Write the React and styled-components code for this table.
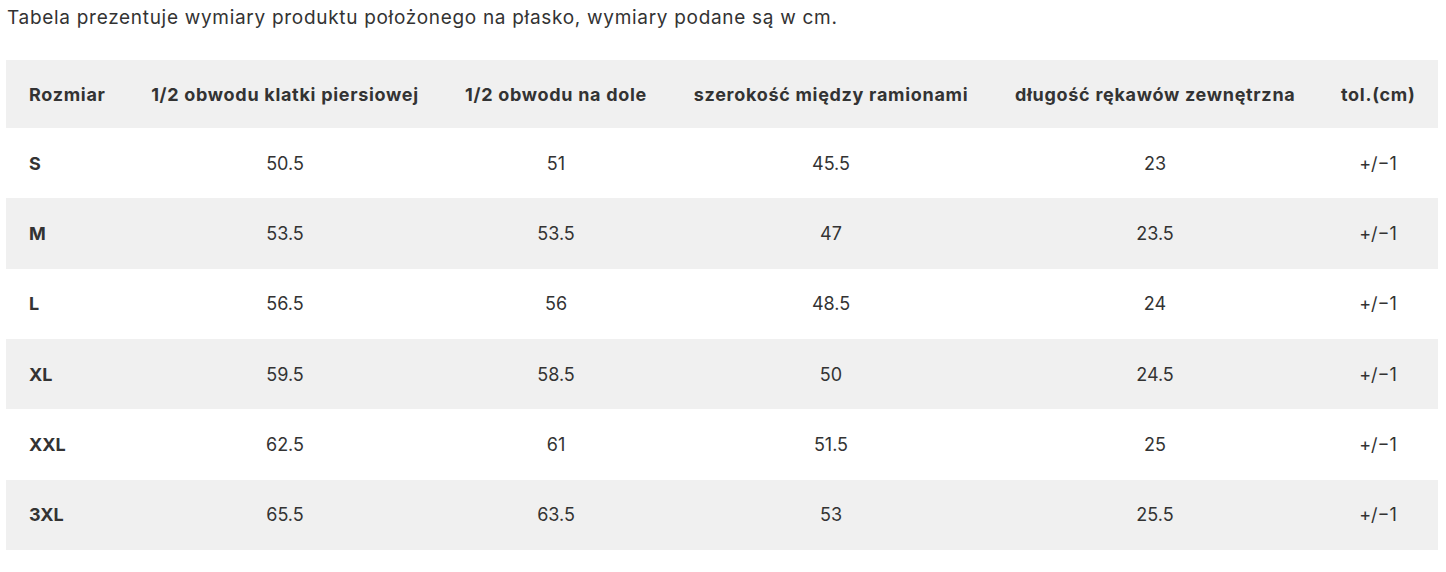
import React from 'react'
import styled, { createGlobalStyle } from 'styled-components'

const GlobalStyle = createGlobalStyle`
  body {
    margin: 0;
    background: #fff;
    color: #333;
    font-family: Inter, "Liberation Sans", sans-serif;
  }
`

const Page = styled.div`
  padding: 0 8px 0 6px;
`

const Intro = styled.p`
  margin: 0;
  padding: 4px 0 0 1px;
  height: 60px;
  box-sizing: border-box;
  font-size: 19px;
  letter-spacing: 0.7px;
  line-height: 28px;
  color: #333;
`

const Table = styled.table`
  width: 1432px;
  border-collapse: collapse;
  table-layout: fixed;
`

const Row = styled.tr`
  height: ${({ $head }) => ($head ? '68px' : '70.33px')};
  background: ${({ $shaded }) => ($shaded ? '#f0f0f0' : '#fff')};
`

const HeadCell = styled.th`
  padding: 0 23px;
  font-size: 18px;
  letter-spacing: 0.7px;
  font-weight: 700;
  color: #333;
  text-align: ${({ $left }) => ($left ? 'left' : 'center')};
  white-space: nowrap;
`

const Cell = styled.td`
  padding: 0 23px;
  font-size: 18px;
  font-weight: ${({ $bold }) => ($bold ? 700 : 400)};
  color: #333;
  text-align: ${({ $left }) => ($left ? 'left' : 'center')};
  white-space: nowrap;
`

const widths = [122, 314, 228, 322, 326, 120]

const headers = [
  'Rozmiar',
  '1/2 obwodu klatki piersiowej',
  '1/2 obwodu na dole',
  'szerokość między ramionami',
  'długość rękawów zewnętrzna',
  'tol.(cm)',
]

const rows = [
  ['S', '50.5', '51', '45.5', '23', '+/−1'],
  ['M', '53.5', '53.5', '47', '23.5', '+/−1'],
  ['L', '56.5', '56', '48.5', '24', '+/−1'],
  ['XL', '59.5', '58.5', '50', '24.5', '+/−1'],
  ['XXL', '62.5', '61', '51.5', '25', '+/−1'],
  ['3XL', '65.5', '63.5', '53', '25.5', '+/−1'],
]

const App = () => {
  return (
    <Page>
      <GlobalStyle />
      <Intro>Tabela prezentuje wymiary produktu położonego na płasko, wymiary podane są w cm.</Intro>
      <Table>
        <colgroup>
          {widths.map((w, i) => (
            <col key={i} style={{ width: w }} />
          ))}
        </colgroup>
        <thead>
          <Row $head $shaded>
            {headers.map((h, i) => (
              <HeadCell key={h} $left={i === 0}>{h}</HeadCell>
            ))}
          </Row>
        </thead>
        <tbody>
          {rows.map((r, ri) => (
            <Row key={r[0]} $shaded={ri % 2 === 1}>
              {r.map((v, i) => (
                <Cell key={i} $left={i === 0} $bold={i === 0}>{v}</Cell>
              ))}
            </Row>
          ))}
        </tbody>
      </Table>
    </Page>
  )
}

export default App
